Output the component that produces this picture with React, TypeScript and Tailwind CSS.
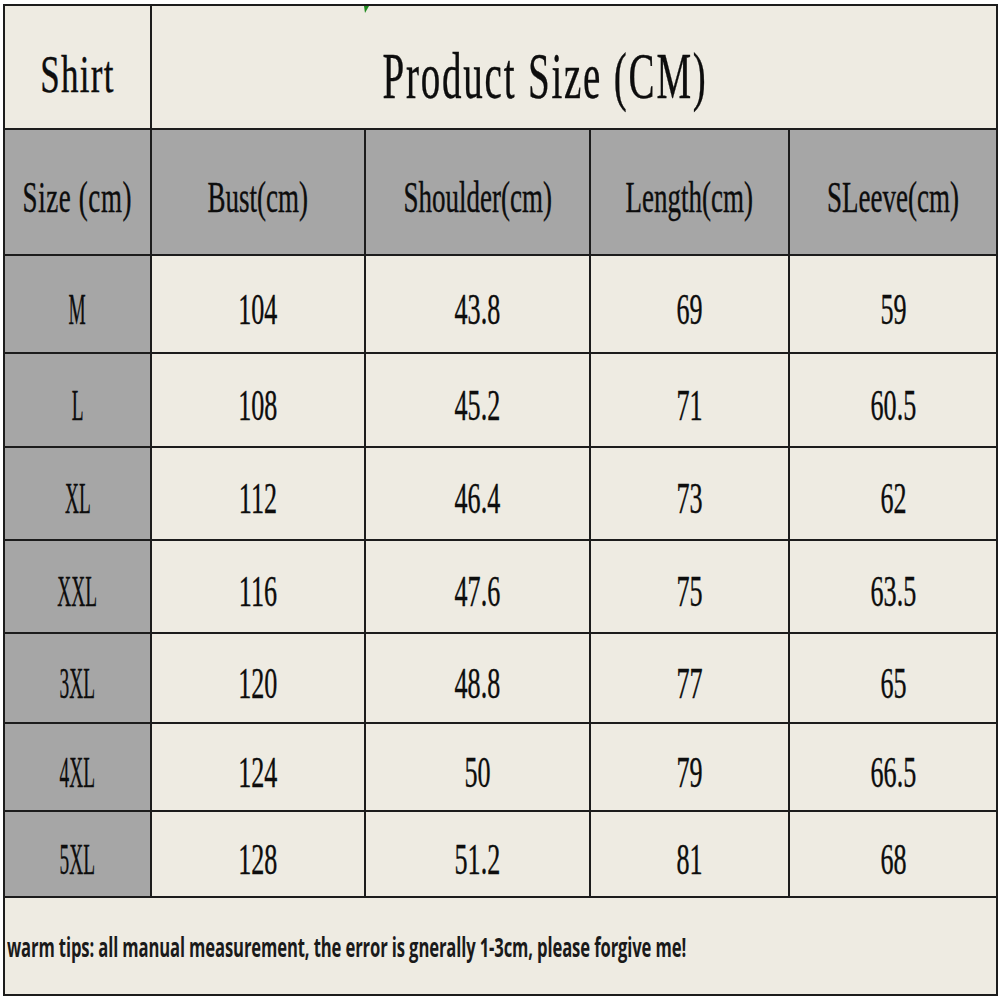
import React from "react";

const serif = { fontFamily: '"Liberation Serif", "Times New Roman", serif' };

const headers = ["Bust(cm)", "Shoulder(cm)", "Length(cm)", "SLeeve(cm)"];
const rows: [string, string, string, string, string][] = [
  ["M", "104", "43.8", "69", "59"],
  ["L", "108", "45.2", "71", "60.5"],
  ["XL", "112", "46.4", "73", "62"],
  ["XXL", "116", "47.6", "75", "63.5"],
  ["3XL", "120", "48.8", "77", "65"],
  ["4XL", "124", "50", "79", "66.5"],
  ["5XL", "128", "51.2", "81", "68"],
];

export default function App() {
  return (
    <div className="w-[1000px] h-[1000px] bg-white pt-[4px] pl-[3px] relative" style={serif}>
      <div
        className="grid bg-[#1c1c1c] p-[2px] gap-[2px] w-[995px] text-[#0d0d0d] [-webkit-text-stroke:0.4px_#0d0d0d]"
        style={{
          gridTemplateColumns: "145px 212px 223px 197px 206px",
          gridTemplateRows: "122px 124px 96px 92px 91px 91px 88px 86px 84px 96px",
        }}
      >
        {/* Row 1 */}
        <div className="bg-[#eeebe2] flex items-center justify-center pt-[15px]">
          <span className="inline-block text-[53px] leading-none scale-x-[0.66] tracking-[2px]">Shirt</span>
        </div>
        <div className="col-span-4 bg-[#eeebe2] flex items-center justify-center pt-[19px] pr-[57px]">
          <span className="inline-block text-[65px] leading-none scale-x-[0.6] tracking-[3px] whitespace-nowrap">
            Product Size (CM)
          </span>
        </div>

        {/* Row 2 */}
        <div className="bg-[#a6a6a6] flex items-center justify-center pt-[10px]">
          <span className="inline-block text-[45px] leading-none scale-x-[0.6] tracking-[1px] whitespace-nowrap">Size (cm)</span>
        </div>
        {headers.map((h) => (
          <div key={h} className="bg-[#a6a6a6] flex items-center justify-center pt-[10px]">
            <span className="inline-block text-[45px] leading-none scale-x-[0.6] whitespace-nowrap">{h}</span>
          </div>
        ))}

        {/* Data rows */}
        {rows.map((r) => (
          <React.Fragment key={r[0]}>
            <div className="bg-[#a6a6a6] flex items-center justify-center pt-[10px]">
              <span className="inline-block text-[45px] leading-none scale-x-[0.43] whitespace-nowrap">{r[0]}</span>
            </div>
            {r.slice(1).map((v, i) => (
              <div key={i} className="bg-[#eeebe2] flex items-center justify-center pt-[10px]">
                <span className="inline-block text-[45px] leading-none scale-x-[0.58] whitespace-nowrap">{v}</span>
              </div>
            ))}
          </React.Fragment>
        ))}

        {/* Footer */}
        <div className="col-span-5 bg-[#eeebe2] flex items-center pl-[2px] pt-[2px] [-webkit-text-stroke:0px]">
          <span
            className="inline-block origin-left scale-x-[0.64] whitespace-nowrap text-[26px] font-bold text-[#1a1a1a] tracking-[-0.2px]"
            style={{ fontFamily: '"Open Sans", "Noto Sans", sans-serif' }}
          >
            warm tips: all manual measurement, the error is gnerally 1-3cm, please forgive me!
          </span>
        </div>
      </div>
      <div className="absolute left-[364px] top-[6px] w-0 h-0 border-t-[7px] border-t-[#1e8a1e] border-r-[4px] border-r-transparent border-l-[1px] border-l-transparent" />
    </div>
  );
}
